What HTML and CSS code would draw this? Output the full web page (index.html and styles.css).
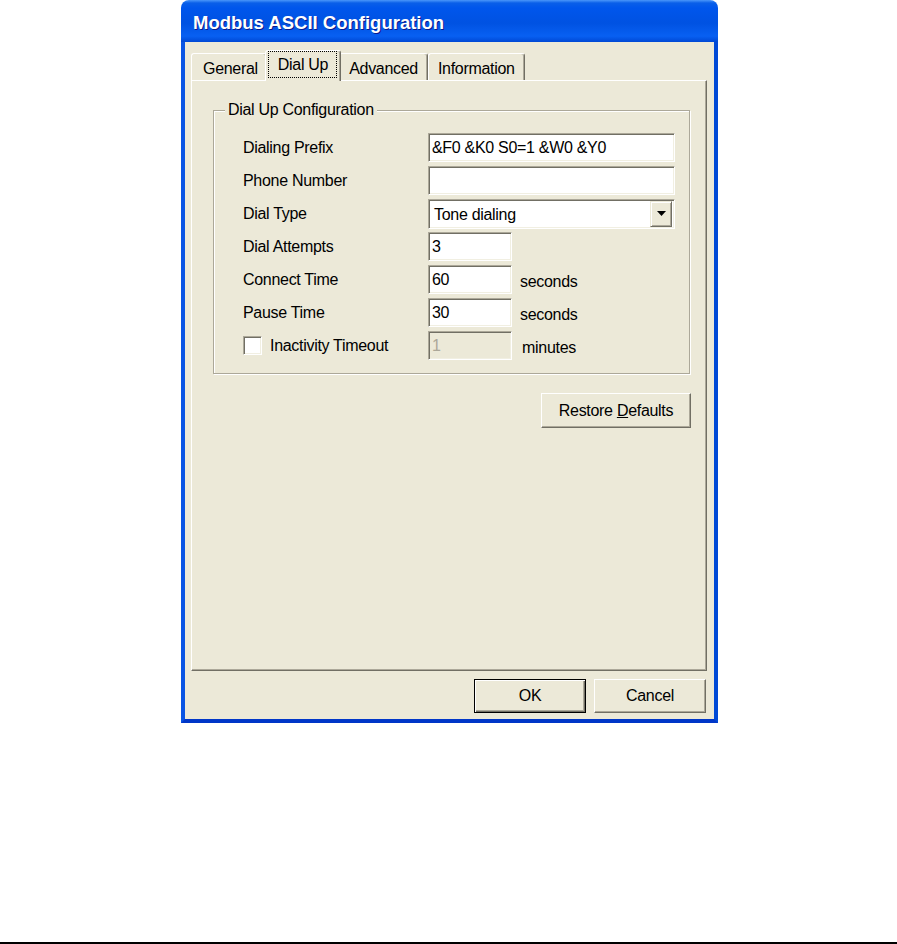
FILE: index.html
```html
<!DOCTYPE html>
<html lang="en">
<head>
  <meta charset="UTF-8">
  <title>Modbus ASCII Configuration</title>
  <link rel="stylesheet" href="styles.css">
</head>
<body>
  <div class="window">
    <div class="titlebar">Modbus ASCII Configuration</div>
    <div class="frame">
      <div class="tabs">
        <span class="tab">General</span>
        <span class="tab active"><span class="focus">Dial Up</span></span>
        <span class="tab">Advanced</span>
        <span class="tab">Information</span>
      </div>

      <div class="panel">
        <fieldset class="group">
          <legend>Dial Up Configuration</legend>
          <div class="form">
            <span class="label">Dialing Prefix</span>
            <input class="field wide" value="&amp;F0 &amp;K0 S0=1 &amp;W0 &amp;Y0">

            <span class="label">Phone Number</span>
            <input class="field wide" value="">

            <span class="label">Dial Type</span>
            <div class="combo">
              <span class="combo-text">Tone dialing</span>
              <span class="combo-btn">
                <svg width="9" height="5" viewBox="0 0 9 5"><polygon points="0,0 9,0 4.5,5" fill="#000"/></svg>
              </span>
            </div>

            <span class="label">Dial Attempts</span>
            <div class="control"><input class="field short" value="3"></div>

            <span class="label">Connect Time</span>
            <div class="control"><input class="field short" value="60"><span class="unit">seconds</span></div>

            <span class="label">Pause Time</span>
            <div class="control"><input class="field short" value="30"><span class="unit">seconds</span></div>

            <label class="label check"><span class="box"></span>Inactivity Timeout</label>
            <div class="control"><input class="field short" value="1" disabled><span class="unit minutes">minutes</span></div>
          </div>
        </fieldset>

        <div class="restore-row">
          <button class="btn restore">Restore <u>D</u>efaults</button>
        </div>
      </div>

      <div class="actions">
        <button class="btn default">OK</button>
        <button class="btn">Cancel</button>
      </div>
    </div>
  </div>
  <div class="rule"></div>
</body>
</html>
```

FILE: styles.css
```css
body {
  margin: 0;
  background: #fff;
  color: #000;
  font-family: "Liberation Sans", Arial, sans-serif;
  font-size: 16px;
  letter-spacing: -0.3px;
}

.window {
  width: 537px;
  height: 723px;
  margin-left: 181px;
  display: flex;
  flex-direction: column;
}

.titlebar {
  height: 42px;
  box-sizing: border-box;
  padding: 4px 0 0 12px;
  line-height: 38px;
  border-radius: 8px 8px 0 0;
  background: linear-gradient(#4a97fa 0, #0a5fe9 3px, #0056ec 8px, #0052e2 55%, #0860f2 86%, #0048d4 100%);
  color: #fff;
  font-size: 18.5px;
  font-weight: bold;
  letter-spacing: 0;
  text-shadow: 1px 1px #0c1a8c;
}

.frame {
  flex: 1;
  display: flex;
  flex-direction: column;
  background: #ece9d8;
  border: 4px solid #0056e8;
  border-top: 0;
  border-left-color: #0a55e4;
  border-right-color: #0049d6;
  border-bottom-color: #0036c8;
}

/* tabs */
.tabs {
  display: flex;
  align-items: flex-end;
  height: 30px;
  margin-top: 8px;
  padding-left: 6px;
}
.tab {
  height: 27px;
  box-sizing: border-box;
  padding: 2px 9px 0;
  line-height: 25px;
  border: 1px solid #fff;
  border-bottom: 0;
  border-right-color: #716f64;
  border-radius: 3px 3px 0 0;
  box-shadow: inset -1px 0 #aca899;
  white-space: nowrap;
}
.tab:first-child {
  padding: 2px 8px 0 11px;
}
.tab.active {
  position: relative;
  z-index: 1;
  height: 31px;
  margin: 0 -2px -1px;
  padding: 1px 4px 0 3px;
  background: #ece9d8;
}
.focus {
  display: inline-block;
  padding: 0 8px 0 9px;
  line-height: 25px;
  outline: 1px dotted #000;
}

.panel {
  height: 591px;
  box-sizing: border-box;
  margin: 0 7px 0 6px;
  border: 1px solid #fff;
  border-right-color: #716f64;
  border-bottom-color: #716f64;
  box-shadow: inset -1px -1px #aca899;
}

/* group box */
.group {
  margin: 20px 16px 0 21px;
  padding: 14px 0 13px 29px;
  border: 1px solid #aca899;
  box-shadow: inset 1px 1px #fff, 1px 1px #fff;
  min-width: 0;
}
.group legend {
  margin-left: -18px;
  padding: 0 3px;
  line-height: 18px;
  background: #ece9d8;
}

.form {
  display: grid;
  grid-template-columns: 185px auto;
  grid-auto-rows: 29px;
  row-gap: 4px;
  align-items: center;
}
.label {
  white-space: nowrap;
}
.check {
  display: flex;
  align-items: center;
  gap: 8px;
}
.box {
  width: 19px;
  height: 19px;
  box-sizing: border-box;
  background: #fff;
  border: 1px solid;
  border-color: #aca899 #fff #fff #aca899;
  box-shadow: inset 1px 1px #716f64, inset -1px -1px #f1efe2;
}

.field {
  box-sizing: border-box;
  height: 29px;
  margin: 0;
  padding: 0 3px;
  font: inherit;
  letter-spacing: inherit;
  color: #000;
  background: #fff;
  border: 1px solid;
  border-color: #aca899 #fff #fff #aca899;
  box-shadow: inset 1px 1px #716f64, inset -1px -1px #f1efe2;
  outline: none;
}
.field:disabled {
  background: #ece9d8;
  color: #aca899;
}
.wide { width: 247px; }
.short { width: 84px; }

.control {
  display: flex;
  align-items: center;
}
.unit {
  margin-left: 8px;
  padding-top: 5px;
}
.unit.minutes { margin-left: 10px; }

.combo {
  display: flex;
  width: 247px;
  height: 30px;
  box-sizing: border-box;
  background: #fff;
  border: 1px solid;
  border-color: #aca899 #fff #fff #aca899;
  box-shadow: inset 1px 1px #716f64, inset -1px -1px #f1efe2;
  padding: 1px 2px 1px 1px;
}
.combo-text {
  flex: 1;
  padding: 2px 0 0 4px;
  line-height: 24px;
}
.combo-btn {
  width: 22px;
  box-sizing: border-box;
  display: flex;
  align-items: center;
  justify-content: center;
  background: #ece9d8;
  border: 1px solid;
  border-color: #ece9d8 #716f64 #716f64 #ece9d8;
  box-shadow: inset 1px 1px #fff, inset -1px -1px #aca899;
}

/* buttons */
.btn {
  box-sizing: border-box;
  height: 34px;
  width: 112px;
  padding: 0;
  font: inherit;
  letter-spacing: inherit;
  color: #000;
  background: #ece9d8;
  border: 1px solid;
  border-color: #fff #716f64 #716f64 #fff;
  box-shadow: inset -1px -1px #aca899;
}
.btn.default {
  border-color: #000;
  box-shadow: inset 1px 1px #fff, inset -1px -1px #716f64, inset -2px -2px #aca899;
}
.restore-row {
  display: flex;
  justify-content: flex-end;
  padding-right: 15px;
  margin-top: 19px;
}
.btn.restore {
  width: 150px;
  height: 35px;
}

.actions {
  display: flex;
  justify-content: flex-end;
  gap: 8px;
  margin-top: 8px;
  padding-right: 8px;
}

.rule {
  height: 2px;
  margin-top: 219px;
  background: #000;
}
```
